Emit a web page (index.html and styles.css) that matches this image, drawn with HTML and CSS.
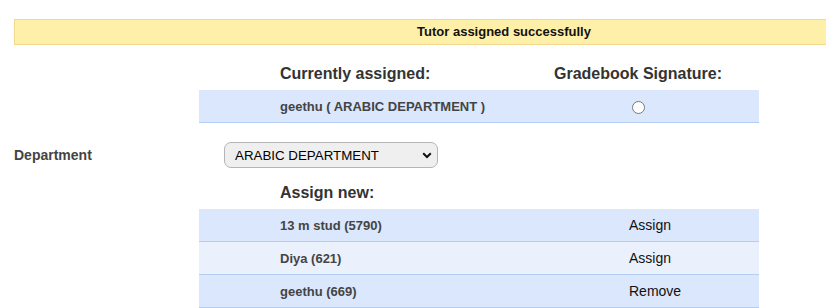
FILE: index.html
```html
<!DOCTYPE html>
<html>
<head>
<meta charset="utf-8">
<link rel="stylesheet" href="styles.css">
</head>
<body>
<div class="banner">Tutor assigned successfully</div>

<div class="section">
  <div class="label"></div>
  <div class="panel">
    <div class="head cur-grid">
      <div></div>
      <div class="title">Currently assigned:</div>
      <div class="title">Gradebook Signature:</div>
      <div></div>
    </div>
    <div class="row cur-grid">
      <div></div>
      <div class="name">geethu ( ARABIC DEPARTMENT )</div>
      <div class="center"><input type="radio" class="radio" name="sig"></div>
      <div></div>
    </div>
  </div>
</div>

<div class="section dept">
  <div class="label">Department</div>
  <div class="select-cell">
    <span class="select-wrap">
      <select class="select">
        <option>ARABIC DEPARTMENT</option>
      </select>
      <svg class="chev" width="10" height="7" viewBox="0 0 10 7"><path d="M1.2 1.2 L5 5 L8.8 1.2" fill="none" stroke="#111" stroke-width="2"/></svg>
    </span>
  </div>
</div>

<div class="section">
  <div class="label"></div>
  <div class="panel">
    <div class="head new-head new-grid">
      <div></div>
      <div class="title">Assign new:</div>
      <div></div>
    </div>
    <div class="row new-grid">
      <div></div>
      <div class="name">13 m stud (5790)</div>
      <div class="action">Assign</div>
    </div>
    <div class="row alt new-grid">
      <div></div>
      <div class="name">Diya (621)</div>
      <div class="action">Assign</div>
    </div>
    <div class="row new-grid">
      <div></div>
      <div class="name">geethu (669)</div>
      <div class="action">Remove</div>
    </div>
  </div>
</div>
</body>
</html>
```

FILE: styles.css
```css
html { overflow: hidden; }
body {
  margin: 0;
  padding-top: 19px;
  font-family: "Liberation Sans", Arial, sans-serif;
  background: #fff;
  color: #444;
}
.banner {
  box-sizing: border-box;
  margin-left: 14px;
  width: calc(100% - 14px);
  height: 26px;
  line-height: 24px;
  padding-left: 167px;
  background: #fff0a9;
  border: 1px solid #f2d98c;
  border-right: none;
  text-align: center;
  font-weight: bold;
  font-size: 13px;
  color: #111;
}
.section {
  display: grid;
  grid-template-columns: 199px 560px;
}
.label {
  padding-left: 14px;
  font-weight: bold;
  font-size: 14px;
  color: #444;
}
.head {
  height: 24px;
  margin-top: 17px;
  margin-bottom: 4px;
  align-items: center;
}
.new-head { margin-top: 13px; }
.title {
  font-weight: bold;
  font-size: 16px;
  color: #333;
  white-space: nowrap;
}
.cur-grid {
  display: grid;
  grid-template-columns: 81px 274px 168px 37px;
}
.new-grid {
  display: grid;
  grid-template-columns: 81px 349px 130px;
}
.row {
  height: 32px;
  align-items: center;
  background: #dae7fc;
  border-bottom: 1px solid #b3cef5;
}
.row.alt { background: #eaf0fc; }
.name {
  font-weight: bold;
  font-size: 13px;
  color: #444;
}
.center {
  display: flex;
  justify-content: center;
  padding-top: 3px;
}
.radio {
  margin: 0;
  width: 13px;
  height: 13px;
}
.action {
  font-size: 14px;
  color: #111;
}
.dept {
  margin-top: 19px;
  align-items: center;
}
.select-cell { padding-left: 25px; display: flex; }
.select-wrap {
  position: relative;
  display: inline-block;
  height: 26px;
}
.select {
  -webkit-appearance: none;
  appearance: none;
  box-sizing: border-box;
  width: 214px;
  height: 26px;
  padding: 0 0 0 10px;
  border: 1px solid #b5b5b5;
  border-radius: 7px;
  background: #efefef;
  font-family: "Liberation Sans", Arial, sans-serif;
  font-size: 13.333px;
  color: #000;
  margin: 0;
  display: block;
}
.chev {
  position: absolute;
  right: 6px;
  top: 10px;
  pointer-events: none;
}
```
